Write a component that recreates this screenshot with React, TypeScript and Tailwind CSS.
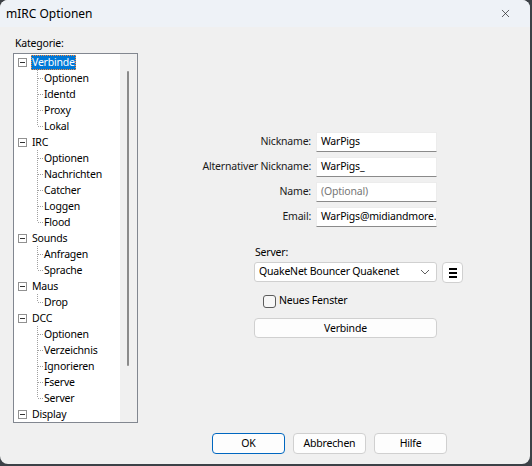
import { X } from 'lucide-react'

interface TreeGroup {
  label: string
  children: string[]
}

const TREE: TreeGroup[] = [
  { label: 'Verbinde', children: ['Optionen', 'Identd', 'Proxy', 'Lokal'] },
  { label: 'IRC', children: ['Optionen', 'Nachrichten', 'Catcher', 'Loggen', 'Flood'] },
  { label: 'Sounds', children: ['Anfragen', 'Sprache'] },
  { label: 'Maus', children: ['Drop'] },
  { label: 'DCC', children: ['Optionen', 'Verzeichnis', 'Ignorieren', 'Fserve', 'Server'] },
  { label: 'Display', children: ['Fenster'] },
]

const FIELDS = [
  { label: 'Nickname:', value: 'WarPigs' },
  { label: 'Alternativer Nickname:', value: 'WarPigs_' },
  { label: 'Name:', value: '', placeholder: '(Optional)' },
  { label: 'Email:', value: 'WarPigs@midiandmore.net' },
]

function MinusBox() {
  return (
    <span className="w-[9px] h-[9px] border border-[#919191] bg-white flex items-center justify-center shrink-0">
      <span className="w-[5px] h-px bg-[#333]" />
    </span>
  )
}

function Branch({ last }: { last: boolean }) {
  return (
    <svg width="7" height="16" className="shrink-0">
      <line x1="0.5" y1="0" x2="0.5" y2={last ? 8 : 16} stroke="#a0a0a0" strokeDasharray="1 1" />
      <line x1="1" y1="8.5" x2="7" y2="8.5" stroke="#a0a0a0" strokeDasharray="1 1" />
    </svg>
  )
}

function Tree() {
  return (
    <div className="w-[125px] h-[370px] border border-[#828790] flex bg-white overflow-hidden">
      <div className="w-[106px] overflow-hidden">
        {TREE.map((group, gi) => (
          <div key={group.label}>
            <div className="h-4 flex items-center pl-[4px]">
              <MinusBox />
              <span
                className={
                  gi === 0
                    ? 'ml-[4px] px-[1px] h-[15px] leading-[15px] bg-[#0078d7] text-white outline-1 outline-dotted outline-[#ff8c3a] -outline-offset-1'
                    : 'ml-[4px] px-[1px] leading-4'
                }
              >
                {group.label}
              </span>
            </div>
            {group.children.map((child, ci) => (
              <div key={child + ci} className="h-4 flex items-center pl-[23px]">
                <Branch last={ci === group.children.length - 1} />
                <span className="leading-4">{child}</span>
              </div>
            ))}
          </div>
        ))}
      </div>
      <div className="w-[17px] bg-[#f0f0f0] pl-[7px] pt-[17px]">
        <div className="w-[2px] h-[295px] bg-[#8b8b8b] rounded-full" />
      </div>
    </div>
  )
}

function WinButton({ label, primary }: { label: string; primary?: boolean }) {
  return (
    <button
      className={
        primary
          ? 'w-[73px] h-[21px] rounded-[4px] border border-[#0067c0] bg-[#fdfdfd] text-black leading-none'
          : 'w-[73px] h-[21px] rounded-[4px] border border-[#d0d0d0] bg-[#fdfdfd] text-black leading-none'
      }
    >
      {label}
    </button>
  )
}

export default function App() {
  return (
    <div className="w-[532px] h-[466px] bg-[#3c4147] font-['Noto_Sans',sans-serif] text-[10.5px] tracking-[-0.2px] text-black">
      <div className="w-[530px] h-[464px] rounded-lg overflow-hidden bg-[#f0f0f0] flex flex-col">
        {/* Title bar */}
        <div className="h-[27px] bg-[#eef2f7] flex items-center justify-between pl-[6px] pr-[18px] shrink-0">
          <span className="text-[12px] tracking-normal">mIRC Optionen</span>
          <X className="w-[13px] h-[13px] text-[#222]" strokeWidth={1.3} />
        </div>

        {/* Body */}
        <div className="flex pl-[13px]">
          {/* Left column */}
          <div className="pt-[8px] shrink-0">
            <div className="leading-4 pl-[2px] mb-[2px]">Kategorie:</div>
            <Tree />
          </div>

          {/* Right column */}
          <div className="pt-[105px] flex flex-col">
            <div className="grid grid-cols-[173px_121px] gap-x-[5px] gap-y-[5px]">
              {FIELDS.map((f) => (
                <div key={f.label} className="contents">
                  <div className="h-5 flex items-center justify-end text-[#1a1a1a] whitespace-nowrap">{f.label}</div>
                  <div className="h-5 bg-white border border-[#ececec] border-b-[#8a8a8a] pl-[4px] flex items-center overflow-hidden whitespace-nowrap">
                    {f.value ? <span>{f.value}</span> : <span className="text-[#777]">{f.placeholder}</span>}
                  </div>
                </div>
              ))}
            </div>

            <div className="ml-[116px] flex flex-col">
              <div className="mt-[17px] h-4 leading-4 pl-[1px]">Server:</div>
              <div className="mt-[2px] flex gap-[5px]">
                <div className="w-[183px] h-5 bg-white border border-[#d0d0d0] rounded-[3px] flex items-center justify-between pl-[4px] pr-[6px]">
                  <span>QuakeNet Bouncer Quakenet</span>
                  <svg width="10" height="6" viewBox="0 0 10 6">
                    <path d="M1 1 L5 5 L9 1" fill="none" stroke="#606060" strokeWidth="1" />
                  </svg>
                </div>
                <div className="w-[21px] h-[21px] bg-white border border-[#d0d0d0] rounded-[4px] flex flex-col items-center justify-center gap-[2px]">
                  <span className="w-[8px] h-[2px] bg-black" />
                  <span className="w-[8px] h-[2px] bg-black" />
                  <span className="w-[8px] h-[2px] bg-black" />
                </div>
              </div>
              <div className="mt-[10px] h-4 flex items-center pl-[9px]">
                <span className="w-[13px] h-[13px] border border-[#5c5c5c] rounded-[3px] bg-[#f7f7f7]" />
                <span className="ml-[3px]">Neues Fenster</span>
              </div>
              <button className="mt-[9px] w-[183px] h-5 bg-[#fdfdfd] border border-[#d0d0d0] rounded-[4px] leading-none">
                Verbinde
              </button>
            </div>
          </div>
        </div>

        {/* Footer buttons */}
        <div className="mt-[10px] flex gap-[8px] pl-[212px]">
          <WinButton label="OK" primary />
          <WinButton label="Abbrechen" />
          <WinButton label="Hilfe" />
        </div>
      </div>
    </div>
  )
}
